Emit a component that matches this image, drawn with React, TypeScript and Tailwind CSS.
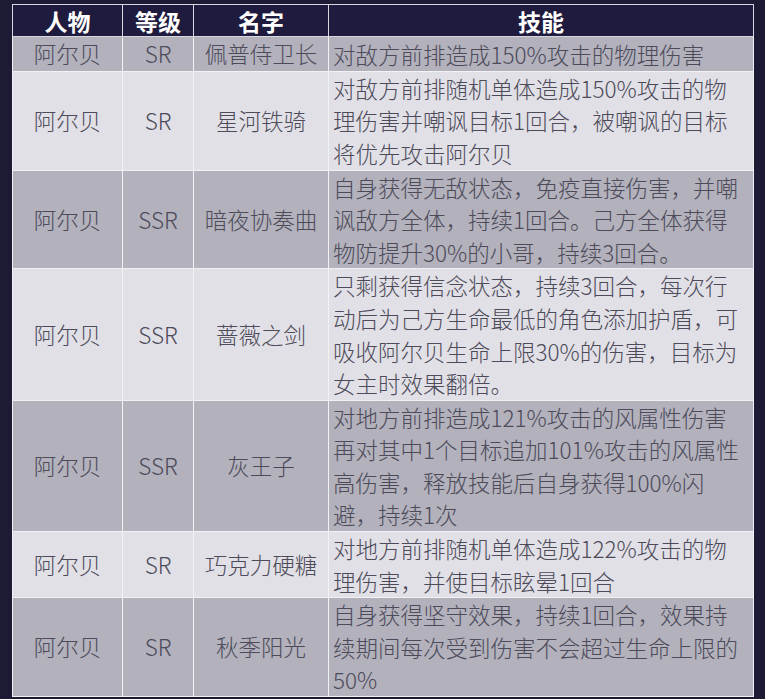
const rows = [
  { who: "阿尔贝", rank: "SR", name: "佩普侍卫长", lines: ["对敌方前排造成150%攻击的物理伤害"] },
  { who: "阿尔贝", rank: "SR", name: "星河铁骑", lines: ["对敌方前排随机单体造成150%攻击的物", "理伤害并嘲讽目标1回合，被嘲讽的目标", "将优先攻击阿尔贝"] },
  { who: "阿尔贝", rank: "SSR", name: "暗夜协奏曲", lines: ["自身获得无敌状态，免疫直接伤害，并嘲", "讽敌方全体，持续1回合。己方全体获得", "物防提升30%的小哥，持续3回合。"] },
  { who: "阿尔贝", rank: "SSR", name: "蔷薇之剑", lines: ["只剩获得信念状态，持续3回合，每次行", "动后为己方生命最低的角色添加护盾，可", "吸收阿尔贝生命上限30%的伤害，目标为", "女主时效果翻倍。"] },
  { who: "阿尔贝", rank: "SSR", name: "灰王子", lines: ["对地方前排造成121%攻击的风属性伤害", "再对其中1个目标追加101%攻击的风属性", "高伤害，释放技能后自身获得100%闪", "避，持续1次"] },
  { who: "阿尔贝", rank: "SR", name: "巧克力硬糖", lines: ["对地方前排随机单体造成122%攻击的物", "理伤害，并使目标眩晕1回合"] },
  { who: "阿尔贝", rank: "SR", name: "秋季阳光", lines: ["自身获得坚守效果，持续1回合，效果持", "续期间每次受到伤害不会超过生命上限的", "50%"] },
];

export default function App() {
  return (
    <div
      className="w-[765px] h-[699px] bg-[#1c1a34] pt-[4px] pl-[12px] overflow-hidden"
      style={{ fontFamily: '"Noto Sans CJK SC", "Noto Sans", sans-serif' }}
    >
      <table className="table-fixed border-collapse w-[741px] text-[#4d4b5a] font-light">
        <colgroup>
          <col className="w-[110px]" />
          <col className="w-[71px]" />
          <col className="w-[135px]" />
          <col className="w-[425px]" />
        </colgroup>
        <thead>
          <tr className="bg-[#1f1b3e] text-white h-[32px]">
            {["人物", "等级", "名字", "技能"].map((h) => (
              <th key={h} className="border border-[#d8d7e0] text-[23px] font-bold leading-[30px] p-0">
                {h}
              </th>
            ))}
          </tr>
        </thead>
        <tbody>
          {rows.map((r, i) => (
            <tr key={i} className={i % 2 === 0 ? "bg-[#b2b1bc]" : "bg-[#e1e0e6]"}>
              <td className="border border-[#f2f2f5] text-center text-[22.5px] p-0">{r.who}</td>
              <td className="border border-[#f2f2f5] text-center text-[22.5px] p-0">{r.rank}</td>
              <td className="border border-[#f2f2f5] text-center text-[22.5px] p-0">{r.name}</td>
              <td className="border border-[#f2f2f5] pl-[4px] pr-0 py-0 text-[22.5px] leading-[32.6px] whitespace-nowrap">
                {r.lines.map((l, j) => (
                  <div key={j}>{l}</div>
                ))}
              </td>
            </tr>
          ))}
        </tbody>
      </table>
    </div>
  );
}
